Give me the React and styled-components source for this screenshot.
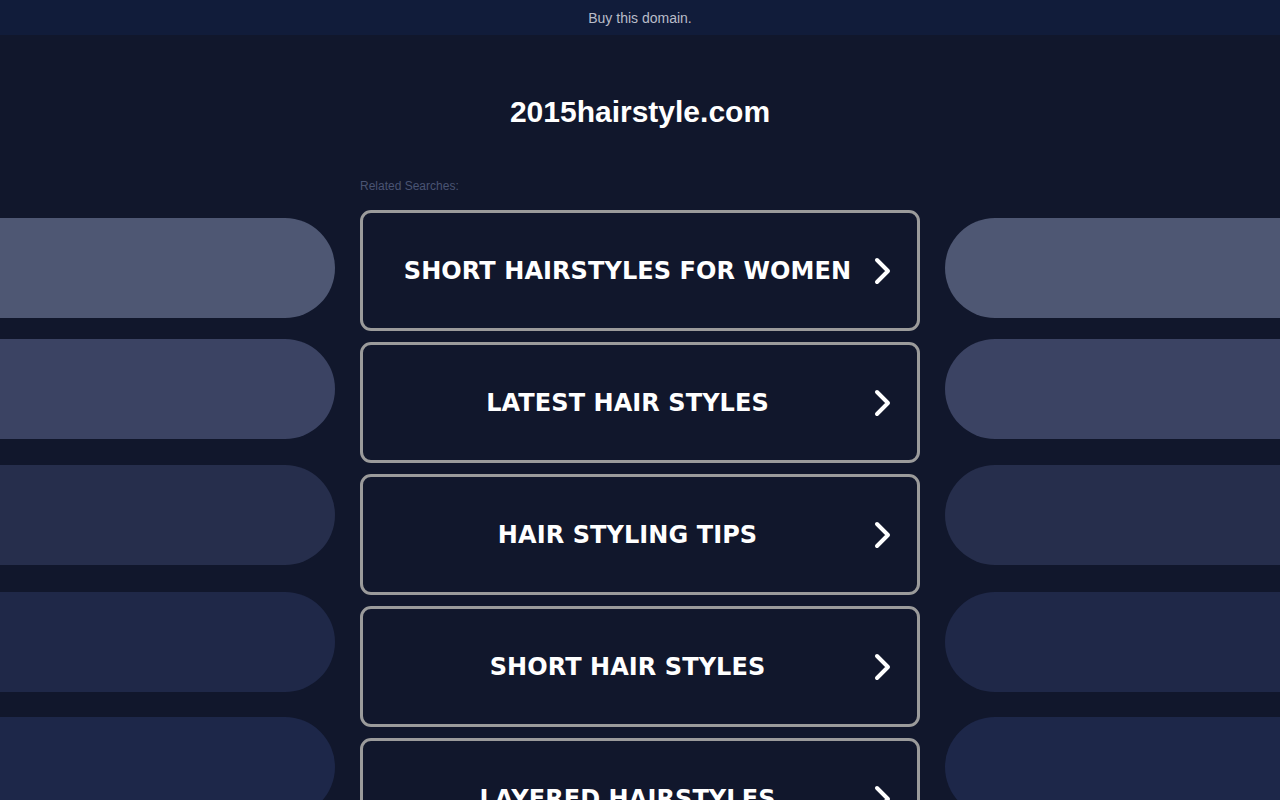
import styled, { createGlobalStyle } from 'styled-components'

const BG = '#11172c'
const BAR = '#111c3a'

const GlobalStyle = createGlobalStyle`
	html, body {
		margin: 0;
		padding: 0;
		background: ${BG};
		font-family: 'Liberation Sans', Arial, sans-serif;
		overflow-x: hidden;
	}
`

const TopBar = styled.div`
	height: 35px;
	display: flex;
	align-items: center;
	justify-content: center;
	background: ${BAR};
	color: #b9bdc9;
	font-size: 14px;
`

const Title = styled.h1`
	margin: 60px 0 0 0;
	font-size: 30px;
	line-height: 34px;
	font-weight: 700;
	text-align: center;
	color: #ffffff;
`

const Grid = styled.div`
	display: grid;
	grid-template-columns: 1fr 560px 1fr;
	column-gap: 25px;
	margin-top: 50px;
	padding-bottom: 40px;
`

const Side = styled.div`
	display: flex;
	flex-direction: column;
	padding-top: 39px;
`

const Pill = styled.div`
	height: 100px;
	margin-top: ${(p) => p.$top}px;
	background-color: ${(p) => p.$color};
	border-radius: ${(p) => (p.$left ? '0 50px 50px 0' : '50px 0 0 50px')};
`

const Center = styled.div`
	display: flex;
	flex-direction: column;
`

const Related = styled.div`
	font-size: 12px;
	line-height: 14px;
	color: #4a5473;
	margin-bottom: 17px;
`

const List = styled.div`
	display: flex;
	flex-direction: column;
	gap: 11px;
`

const Item = styled.a`
	box-sizing: border-box;
	height: 121px;
	display: flex;
	align-items: center;
	padding: 0 22px;
	border: 3px solid #9b9b9b;
	border-radius: 11px;
	color: #ffffff;
	text-decoration: none;
	cursor: pointer;
`

const ItemText = styled.span`
	flex: 1;
	text-align: center;
	font-family: 'DejaVu Sans', Verdana, sans-serif;
	font-weight: 700;
	font-size: 24px;
	letter-spacing: 0.08px;
	text-transform: uppercase;
`

const Chevron = () => (
	<svg width="25" height="30" viewBox="0 0 25 30">
		<polyline
			points="7,4 18,15 7,26"
			fill="none"
			stroke="#ffffff"
			strokeWidth="4"
			strokeLinecap="round"
			strokeLinejoin="round"
		/>
	</svg>
)

const pills = [
	{ color: '#4e5773', top: 0 },
	{ color: '#3b4363', top: 21 },
	{ color: '#262e4c', top: 26 },
	{ color: '#1f2848', top: 27 },
	{ color: '#1d2749', top: 25 },
]

const searches = [
	'Short Hairstyles for Women',
	'Latest Hair Styles',
	'Hair Styling Tips',
	'Short Hair Styles',
	'Layered Hairstyles',
]

export default function App() {
	function renderPills(left) {
		return pills.map(({ color, top }, index) => (
			<Pill key={index} $color={color} $top={top} $left={left} />
		))
	}
	return (
		<>
			<GlobalStyle />
			<TopBar>Buy this domain.</TopBar>
			<Title>2015hairstyle.com</Title>
			<Grid>
				<Side>{renderPills(true)}</Side>
				<Center>
					<Related>Related Searches:</Related>
					<List>
						{searches.map((text, index) => (
							<Item key={index}>
								<ItemText>{text}</ItemText>
								<Chevron />
							</Item>
						))}
					</List>
				</Center>
				<Side>{renderPills(false)}</Side>
			</Grid>
		</>
	)
}
